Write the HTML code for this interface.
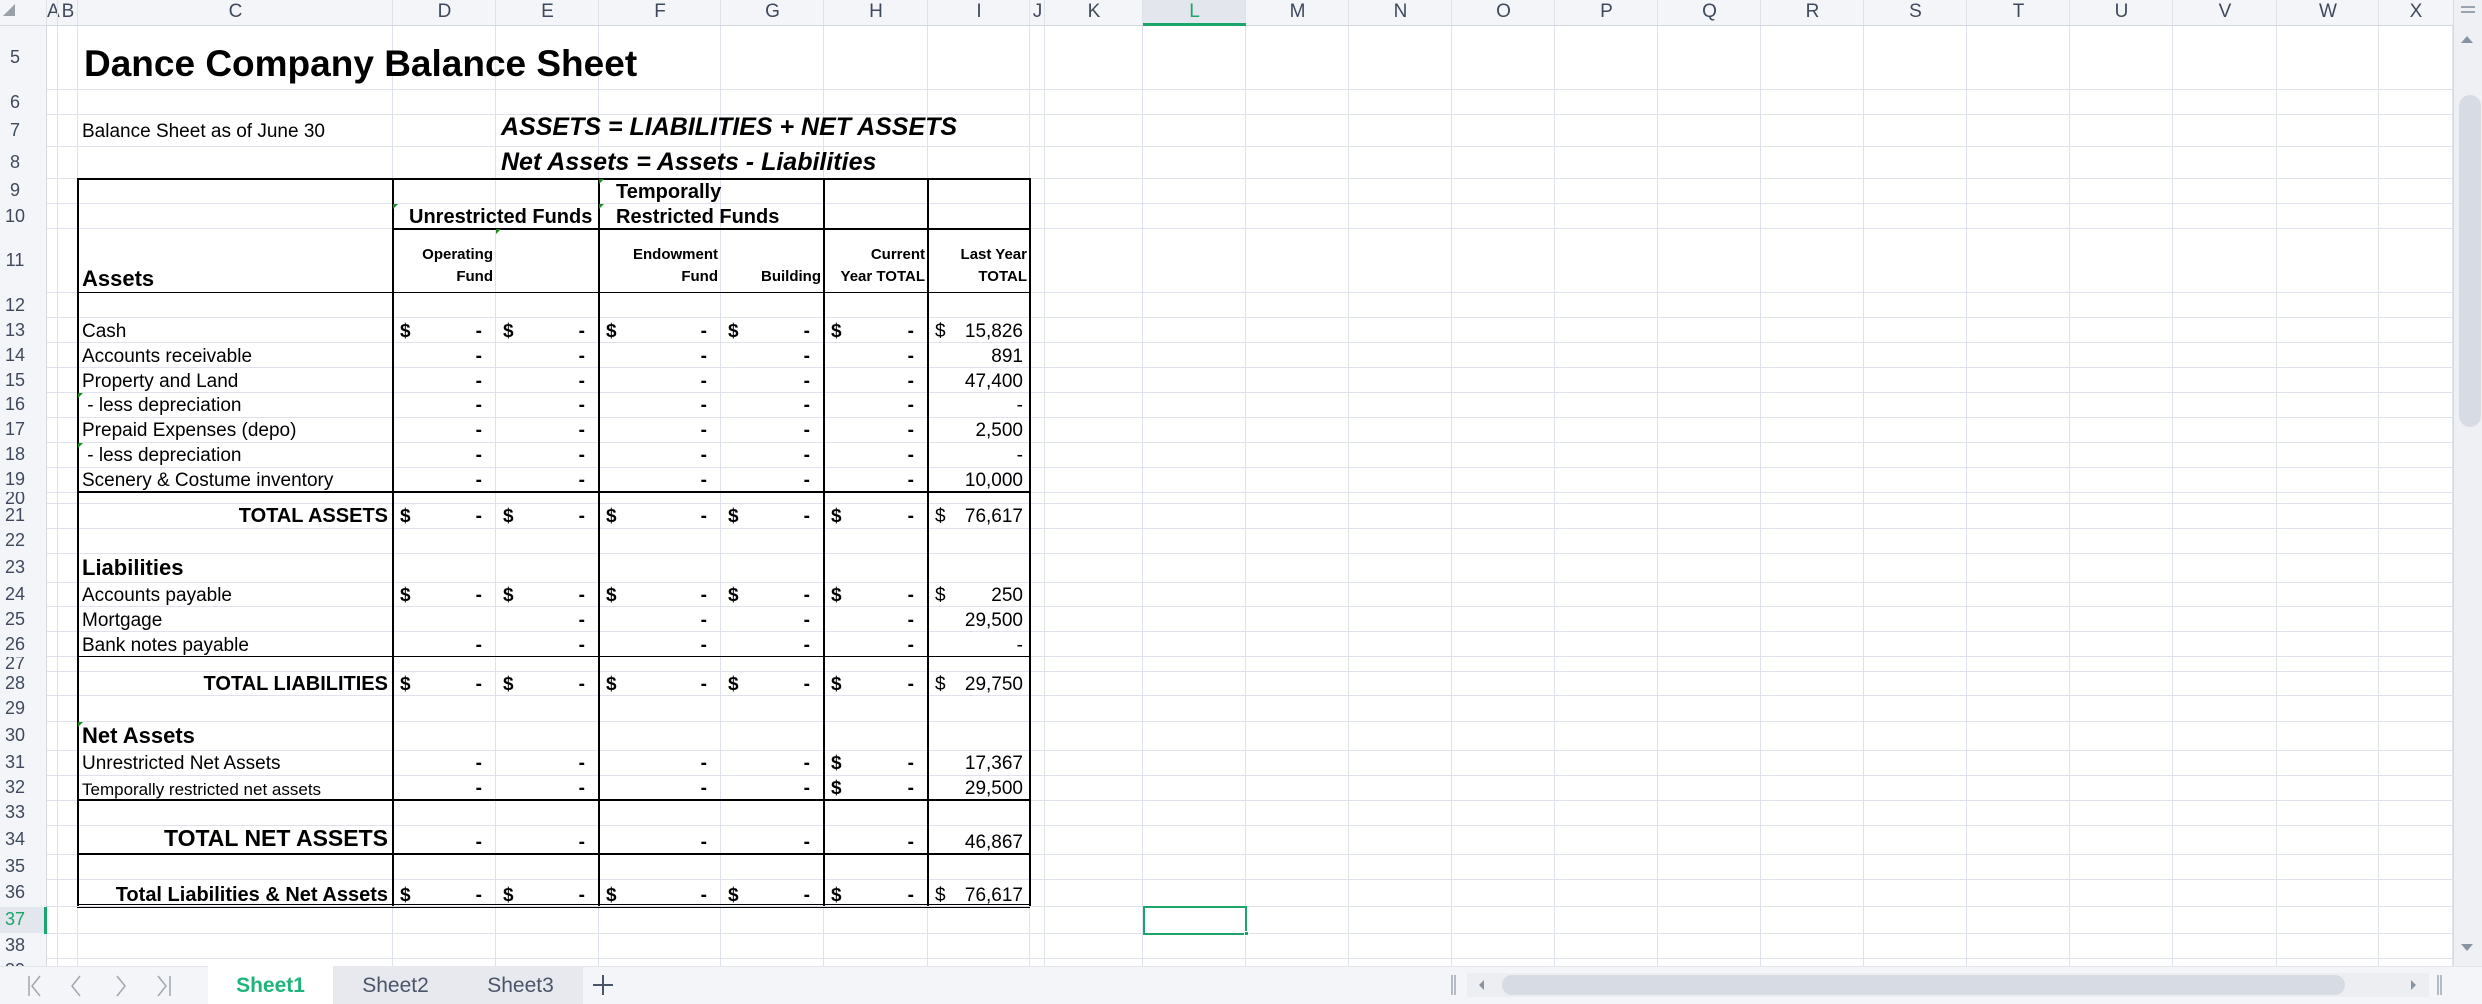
<!DOCTYPE html>
<html><head><meta charset="utf-8"><style>
*{margin:0;padding:0;box-sizing:border-box}
body{width:2482px;height:1004px;overflow:hidden;background:#fff;position:relative;font-family:"Liberation Sans",Arial,sans-serif;}
.a{position:absolute}
.t{position:absolute;white-space:nowrap;color:#000;display:flex;align-items:flex-end;padding-bottom:2px;line-height:1}
</style></head><body>
<div id="root"></div>
<script>
var X=[0,47,58,78,393,496,599,721,824,928,1030,1045,1143,1246,1349,1452,1555,1658,1761,1864,1967,2070,2173,2277,2379,2453];
var names=["","A","B","C","D","E","F","G","H","I","J","K","L","M","N","O","P","Q","R","S","T","U","V","W","X"];
var Y=[25.6,89.6,114.6,146.6,178,203.6,228.6,292.6,317.5,342.5,367.5,392.5,417.4,442.4,467.3,492.3,503.8,528.2,553.1,582,606.9,631.9,656.9,671,695.9,721.5,750.3,775.3,800.2,825.2,854,879,906.5,933.4,958.4,983];
var h='';
function box(x,y,w,ht,st){h+='<div class="a" style="left:'+x+'px;top:'+y+'px;width:'+w+'px;height:'+ht+'px;'+st+'"></div>';}
for(var i=1;i<X.length;i++){box(X[i]-1,25,1,941,'background:#dde2ec');}
for(var j=0;j<Y.length;j++){box(0,Y[j]-0.5,2453,1,'background:#dde2ec');}
box(0,0,2453,25,'background:#f4f5f8');
box(0,0,47,966,'background:#f4f5f8');
box(0,25,2453,1,'background:#d3d7e0');
box(46,0,1,966,'background:#d3d7e0');
for(var i=1;i<X.length-1;i++){
 var c=names[i]=='L'?'#1aa66a':'#3e4a5c';
 if(names[i]=='L')box(X[i],0,X[i+1]-X[i],25,'background:#e3e6ec');
 h+='<div class="a" style="left:'+X[i]+'px;top:1px;width:'+(X[i+1]-X[i])+'px;text-align:center;font-size:19px;color:'+c+'">'+names[i]+'</div>';
 box(X[i]-1,0,1,25,'background:#dde1e8');
}
box(1143,23,103,3,'background:#1aa66a');
h+='<div class="a" style="left:3px;top:4px;width:0;height:0;border-left:12px solid transparent;border-bottom:12px solid #9aa0a8"></div>';
for(var j=0;j<Y.length-1;j++){
 var r=5+j, c=r==37?'#1aa66a':'#3e4a5c';
 var hh=Y[j+1]-Y[j];
 if(r==37)box(0,Y[j],47,hh,'background:#e3e6ec');
 h+='<div class="a" style="left:0;top:'+Y[j]+'px;width:30px;height:'+hh+'px;overflow:hidden;display:flex;align-items:center;justify-content:center;font-size:18px;color:'+c+'">'+r+'</div>';
}
box(44,906.5,3,27,'background:#1aa66a');
function rowY(r){return Y[r-5];}
function rowH(r){return Y[r-4]-Y[r-5];}
function txt(col,r,s,st,al){
 var ci=names.indexOf(col);var x=X[ci],w=X[ci+1]-X[ci];
 var jc=al=='r'?'flex-end':(al=='c'?'center':'flex-start');
 h+='<div class="t" style="left:'+(x+3)+'px;top:'+rowY(r)+'px;width:'+(w-8)+'px;height:'+rowH(r)+'px;justify-content:'+jc+';'+st+'">'+s+'</div>';
}
function free(x,r,s,st,r2){var y=rowY(r),hh=(r2?Y[r2-4]:Y[r-4])-y;h+='<div class="t" style="left:'+x+'px;top:'+y+'px;height:'+hh+'px;'+st+'">'+s+'</div>';}
free(84,5,'Dance Company Balance Sheet','font-size:37px;font-weight:bold;padding-bottom:8px');
free(82,7,'Balance Sheet as of June 30','font-size:19px;padding-bottom:6px');
free(501,7,'ASSETS = LIABILITIES + NET ASSETS','font-size:25px;font-weight:bold;font-style:italic;padding-bottom:7px');
free(501,8,'Net Assets = Assets - Liabilities','font-size:25px;font-weight:bold;font-style:italic;padding-bottom:3px');
free(616,9,'Temporally','font-size:20px;font-weight:bold');
free(409,10,'Unrestricted Funds','font-size:20px;font-weight:bold');
free(616,10,'Restricted Funds','font-size:20px;font-weight:bold');
h+='<div class="a" style="left:393px;top:244px;width:100px;font-size:15px;font-weight:bold;line-height:22px;text-align:right">Operating<br>Fund</div>';
h+='<div class="a" style="left:599px;top:244px;width:119px;font-size:15px;font-weight:bold;line-height:22px;text-align:right">Endowment<br>Fund</div>';
h+='<div class="a" style="left:721px;top:266px;width:100px;font-size:15px;font-weight:bold;line-height:22px;text-align:right">Building</div>';
h+='<div class="a" style="left:824px;top:244px;width:101px;font-size:15px;font-weight:bold;line-height:22px;text-align:right">Current<br>Year TOTAL</div>';
h+='<div class="a" style="left:928px;top:244px;width:99px;font-size:15px;font-weight:bold;line-height:22px;text-align:right">Last Year<br>TOTAL</div>';
free(82,11,'Assets','font-size:22px;font-weight:bold;padding-bottom:3px');
var lab={13:'Cash',14:'Accounts receivable',15:'Property and Land',16:'&nbsp;- less depreciation',17:'Prepaid Expenses (depo)',18:'&nbsp;- less depreciation',19:'Scenery &amp; Costume inventory',24:'Accounts payable',25:'Mortgage',26:'Bank notes payable',31:'Unrestricted Net Assets'};
for(var k in lab)free(82,+k,lab[k],'font-size:19px');
free(82,32,'Temporally restricted net assets','font-size:17px');
free(82,23,'Liabilities','font-size:22px;font-weight:bold;padding-bottom:3px');
free(82,30,'Net Assets','font-size:22px;font-weight:bold;padding-bottom:3px');
txt('C',21,'TOTAL ASSETS','font-size:20px;font-weight:bold','r');
txt('C',28,'TOTAL LIABILITIES','font-size:20px;font-weight:bold','r');
txt('C',34,'TOTAL NET ASSETS','font-size:23px;font-weight:bold;padding-bottom:4px','r');
txt('C',36,'Total Liabilities &amp; Net Assets','font-size:20px;font-weight:bold','r');
var cols=['D','E','F','G','H'];
function dl(col,r,d){var ci=names.indexOf(col),x=X[ci],w=X[ci+1]-X[ci];
 if(d)h+='<div class="t" style="left:'+(x+7)+'px;top:'+rowY(r)+'px;height:'+rowH(r)+'px;font-size:19px;font-weight:bold">$</div>';
 h+='<div class="t" style="left:'+x+'px;top:'+rowY(r)+'px;width:'+(w-14)+'px;height:'+rowH(r)+'px;justify-content:flex-end;font-size:19px;font-weight:bold">-</div>';}
[13,21,24,28,36].forEach(function(r){cols.forEach(function(c){dl(c,r,1)})});
[14,15,16,17,18,19].forEach(function(r){cols.forEach(function(c){dl(c,r,0)})});
[25].forEach(function(r){['E','F','G','H'].forEach(function(c){dl(c,r,0)})});
[26,34].forEach(function(r){cols.forEach(function(c){dl(c,r,0)})});
[31,32].forEach(function(r){['D','E','F','G'].forEach(function(c){dl(c,r,0)});dl('H',r,1)});
function iv(r,s,d){var x=928;
 if(d)h+='<div class="t" style="left:'+(x+7)+'px;top:'+rowY(r)+'px;height:'+rowH(r)+'px;font-size:19px">$</div>';
 h+='<div class="t" style="left:'+x+'px;top:'+rowY(r)+'px;width:95px;height:'+rowH(r)+'px;justify-content:flex-end;font-size:19px">'+s+'</div>';}
iv(13,'15,826',1);iv(14,'891');iv(15,'47,400');iv(16,'-');iv(17,'2,500');iv(18,'-');iv(19,'10,000');
iv(21,'76,617',1);iv(24,'250',1);iv(25,'29,500');iv(26,'-');iv(28,'29,750',1);iv(31,'17,367');iv(32,'29,500');iv(34,'46,867');iv(36,'76,617',1);
var L=78,R=1030,B='#000';
box(L-1,178,R-L+1,1.5,'background:'+B);
box(L-1,178,1.5,728,'background:'+B);
[393,599,824,928,1030].forEach(function(x){box(x-1,178,1.5,728,'background:'+B)});
box(393,228,R-393,1.5,'background:'+B);
[292.6,492.3,656.9,800.2,854].forEach(function(y){box(L-1,y-1,R-L+1,1.5,'background:'+B)});
box(L-1,904,R-L+1,1.3,'background:'+B);box(L-1,907,R-L+1,1.3,'background:'+B);
function tri(x,y){h+='<div class="a" style="left:'+x+'px;top:'+y+'px;border-top:5px solid #1a8a1a;border-right:5px solid transparent"></div>';}
tri(393,204);tri(496,229);tri(599,179);tri(599,204);tri(78,393);tri(78,443);tri(78,722);
box(1143,905.5,104,29,'border:2.5px solid #1aa66a');
box(1244,931,5,5,'background:#1aa66a;border:1px solid #fff');
box(2453,0,29,966,'background:#eef0f4');
box(2453,0,1,966,'background:#d8dce4');
box(2461,6,14,1.5,'background:#9aa3b0');box(2461,11,14,1.5,'background:#9aa3b0');
h+='<div class="a" style="left:2461px;top:36px;border-left:6px solid transparent;border-right:6px solid transparent;border-bottom:7px solid #8a93a3"></div>';
h+='<div class="a" style="left:2461px;top:944px;border-left:6px solid transparent;border-right:6px solid transparent;border-top:7px solid #8a93a3"></div>';
box(2459,95,22,332,'background:#d7dbe3;border-radius:11px');
box(0,966,2482,38,'background:#f4f5f8');
box(0,966,2482,1,'background:#e2e5ea');
box(208,966,125,38,'background:#fff');
box(333,966,250,38,'background:#e7e9ee');
h+='<svg class="a" style="left:20px;top:972px" width="170" height="28"><g stroke="#a0a6b0" stroke-width="1.5" fill="none"><path d="M9 4v20M20 4l-8 10 8 10"/><path d="M60 4l-8 10 8 10"/><path d="M97 4l8 10-8 10"/><path d="M138 4l8 10-8 10M150 4v20"/></g></svg>';
h+='<div class="a" style="left:208px;top:974px;width:125px;text-align:center;font-size:21px;font-weight:bold;color:#1fb57a">Sheet1</div>';
h+='<div class="a" style="left:333px;top:974px;width:125px;text-align:center;font-size:21px;color:#4a556a">Sheet2</div>';
h+='<div class="a" style="left:458px;top:974px;width:125px;text-align:center;font-size:21px;color:#4a556a">Sheet3</div>';
h+='<svg class="a" style="left:590px;top:972px" width="26" height="26"><path d="M13 3v20M3 13h20" stroke="#4a556a" stroke-width="2"/></svg>';
box(1451,975,1.5,20,'background:#b5bbc5');box(1454,975,1.5,20,'background:#b5bbc5');
box(1467,973,962,24,'background:#eceef2');
box(1502,975,843,20,'background:#d7dbe3;border-radius:10px');
h+='<div class="a" style="left:1479px;top:980px;border-top:5px solid transparent;border-bottom:5px solid transparent;border-right:5px solid #8a93a3"></div>';
h+='<div class="a" style="left:2411px;top:980px;border-top:5px solid transparent;border-bottom:5px solid transparent;border-left:5px solid #8a93a3"></div>';
box(2437,975,1.5,20,'background:#b5bbc5');box(2440,975,1.5,20,'background:#b5bbc5');
document.getElementById('root').innerHTML=h;
</script>
</body></html>
